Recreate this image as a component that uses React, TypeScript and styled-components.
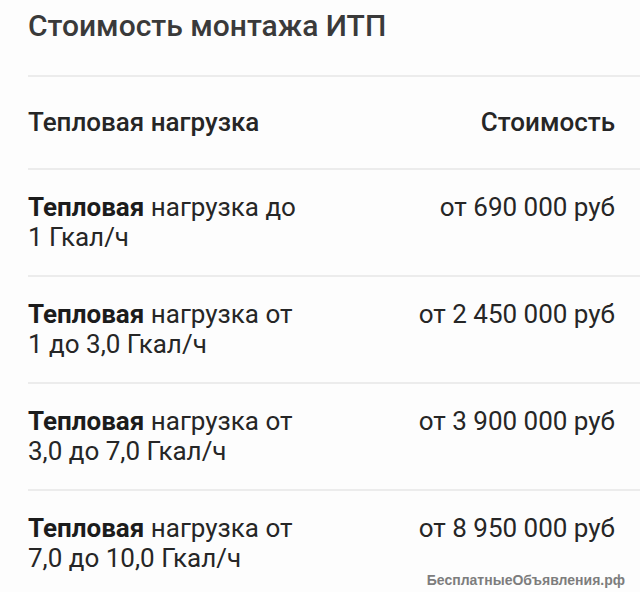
import React from 'react';
import styled, {createGlobalStyle} from 'styled-components';

const GlobalStyle = createGlobalStyle`
  html, body {
    margin: 0;
    padding: 0;
    background: #fdfdfd;
  }
  body {
    font-family: Roboto, "Noto Sans", "Liberation Sans", sans-serif;
    color: #262626;
  }
`;

const Page = styled.div`
  position: relative;
  width: 640px;
  height: 592px;
  overflow: hidden;
  padding-left: 28px;
  box-sizing: border-box;
`;

const Title = styled.h2`
  margin: 0;
  padding: 8px 0 0;
  height: 77px;
  box-sizing: border-box;
  font-size: 30px;
  line-height: 36px;
  font-weight: 500;
  color: #3a3a3a;
  border-bottom: 2px solid #ececec;
`;

const Row = styled.div<{ $head?: boolean; $last?: boolean }>`
  display: flex;
  justify-content: space-between;
  align-items: flex-start;
  box-sizing: border-box;
  height: ${p => (p.$head ? '93px' : '107px')};
  padding: ${p => (p.$head ? '30px 25px 0 0' : '22px 25px 0 0')};
  border-bottom: ${p => (p.$last ? 'none' : '2px solid #ececec')};
  font-size: 26px;
  line-height: 30px;
  font-weight: ${p => (p.$head ? 500 : 400)};
`;

const Name = styled.div`
  width: 282px;
  > b {
    font-weight: 700;
    color: #1c1c1c;
  }
`;

const Price = styled.div`
  text-align: right;
`;

const Watermark = styled.div`
  position: absolute;
  right: 15px;
  bottom: 3px;
  font-family: "Liberation Sans", Arial, sans-serif;
  font-weight: 700;
  font-size: 14px;
  line-height: 18px;
  color: #7d7d7d;
`;

const rows = [
	{rest: 'нагрузка до 1 Гкал/ч', price: 'от 690 000 руб'},
	{rest: 'нагрузка от 1 до 3,0 Гкал/ч', price: 'от 2 450 000 руб'},
	{rest: 'нагрузка от 3,0 до 7,0 Гкал/ч', price: 'от 3 900 000 руб'},
	{rest: 'нагрузка от 7,0 до 10,0 Гкал/ч', price: 'от 8 950 000 руб'},
];

function App() {
	return (
		<Page>
			<GlobalStyle/>
			<Title>Стоимость монтажа ИТП</Title>
			<Row $head>
				<div>Тепловая нагрузка</div>
				<div>Стоимость</div>
			</Row>
			{rows.map((r, i) =>
				<Row key={i} $last={i === rows.length - 1}>
					<Name><b>Тепловая</b> {r.rest}</Name>
					<Price>{r.price}</Price>
				</Row>
			)}
			<Watermark>БесплатныеОбъявления.рф</Watermark>
		</Page>
	);
}

export default App;
